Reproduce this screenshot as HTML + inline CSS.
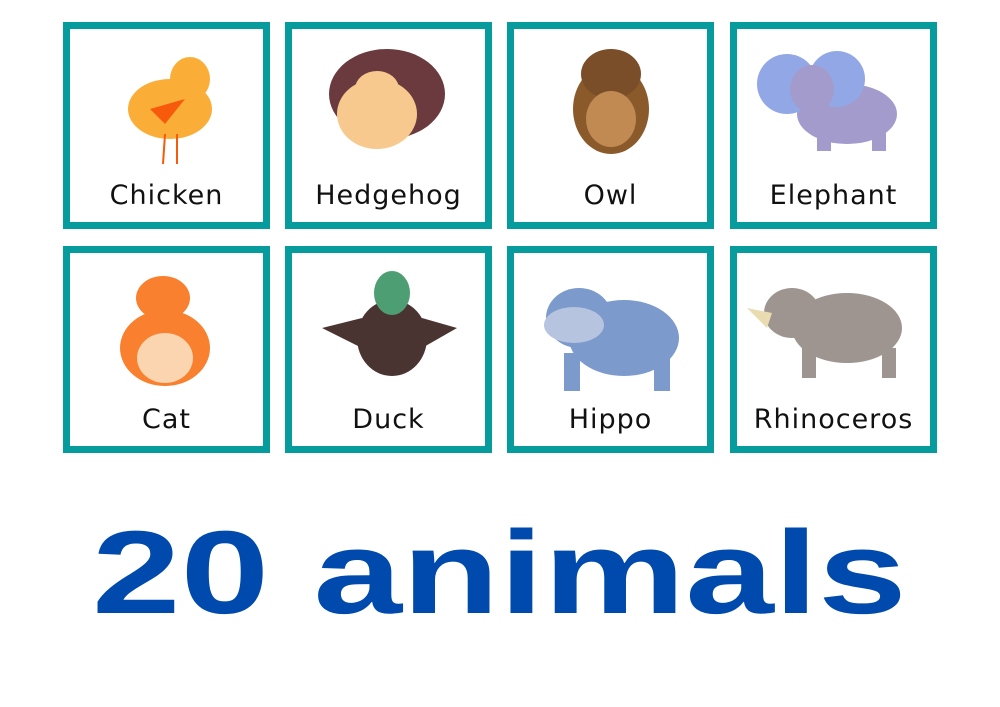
<!DOCTYPE html>
<html><head><meta charset="utf-8"><style>
body{margin:0;width:1000px;height:707px;background:#fff;position:relative;overflow:hidden;font-family:"Liberation Sans",sans-serif}
.c{position:absolute;width:193px;height:193px;border:7px solid #069c9e;background:#fff}
.c svg{position:absolute;left:0;top:0}
.l{position:absolute;left:0;right:0;top:151px;text-align:center;font-size:27px;color:#111;letter-spacing:1px;font-family:"DejaVu Sans","Liberation Sans",sans-serif}
.big{position:absolute;left:92px;top:514px;font-weight:bold;font-size:118px;color:#004aad;transform-origin:0 0;transform:scaleX(1.35);white-space:nowrap;line-height:1}
</style></head><body>
<div class="c" style="left:63px;top:22px"><svg width="193" height="193"><ellipse cx="100" cy="80" rx="42" ry="30" fill="#fbae37"/><ellipse cx="120" cy="50" rx="20" ry="22" fill="#fbae37"/><path d="M80 80 L115 70 L95 95Z" fill="#f85a0c"/><line x1="95" y1="105" x2="93" y2="135" stroke="#f85a0c" stroke-width="2"/><line x1="107" y1="105" x2="107" y2="135" stroke="#f85a0c" stroke-width="2"/></svg><div class="l">Chicken</div></div>
<div class="c" style="left:285px;top:22px"><svg width="193" height="193"><ellipse cx="95" cy="65" rx="58" ry="45" fill="#6a3a3e"/><ellipse cx="85" cy="85" rx="40" ry="35" fill="#f8c98e"/><ellipse cx="85" cy="60" rx="22" ry="18" fill="#f8c98e"/></svg><div class="l">Hedgehog</div></div>
<div class="c" style="left:507px;top:22px"><svg width="193" height="193"><ellipse cx="97" cy="80" rx="38" ry="45" fill="#8b5a2b"/><ellipse cx="97" cy="45" rx="30" ry="25" fill="#7a4e28"/><ellipse cx="97" cy="90" rx="25" ry="28" fill="#c08a52"/></svg><div class="l">Owl</div></div>
<div class="c" style="left:730px;top:22px"><svg width="193" height="193"><ellipse cx="110" cy="85" rx="50" ry="30" fill="#a39bcc"/><ellipse cx="50" cy="55" rx="30" ry="30" fill="#92a7e6"/><ellipse cx="100" cy="50" rx="28" ry="28" fill="#92a7e6"/><ellipse cx="75" cy="60" rx="22" ry="24" fill="#a39bcc"/><rect x="80" y="100" width="14" height="22" fill="#a39bcc"/><rect x="135" y="100" width="14" height="22" fill="#a39bcc"/></svg><div class="l">Elephant</div></div>
<div class="c" style="left:63px;top:246px"><svg width="193" height="193"><ellipse cx="95" cy="95" rx="45" ry="38" fill="#f8802e"/><ellipse cx="95" cy="105" rx="28" ry="25" fill="#fbd5b0"/><ellipse cx="93" cy="45" rx="27" ry="22" fill="#f8802e"/></svg><div class="l">Cat</div></div>
<div class="c" style="left:285px;top:246px"><svg width="193" height="193"><ellipse cx="100" cy="85" rx="35" ry="38" fill="#4a3432"/><path d="M30 75 L70 65 L70 95Z M165 75 L130 65 L130 95Z" fill="#4a3432"/><ellipse cx="100" cy="40" rx="18" ry="22" fill="#4e9e73"/></svg><div class="l">Duck</div></div>
<div class="c" style="left:507px;top:246px"><svg width="193" height="193"><ellipse cx="110" cy="85" rx="55" ry="38" fill="#7c9acb"/><ellipse cx="65" cy="65" rx="33" ry="30" fill="#7c9acb"/><ellipse cx="60" cy="72" rx="30" ry="18" fill="#b6c4df"/><rect x="50" y="100" width="16" height="38" fill="#7c9acb"/><rect x="140" y="100" width="16" height="38" fill="#7c9acb"/></svg><div class="l">Hippo</div></div>
<div class="c" style="left:730px;top:246px"><svg width="193" height="193"><ellipse cx="110" cy="75" rx="55" ry="35" fill="#9e9590"/><ellipse cx="55" cy="60" rx="28" ry="25" fill="#9e9590"/><path d="M10 55 L35 60 L30 75Z" fill="#e8dcb0"/><rect x="65" y="95" width="14" height="30" fill="#9e9590"/><rect x="145" y="95" width="14" height="30" fill="#9e9590"/></svg><div class="l">Rhinoceros</div></div>
<div class="big">20 animals</div>
</body></html>
